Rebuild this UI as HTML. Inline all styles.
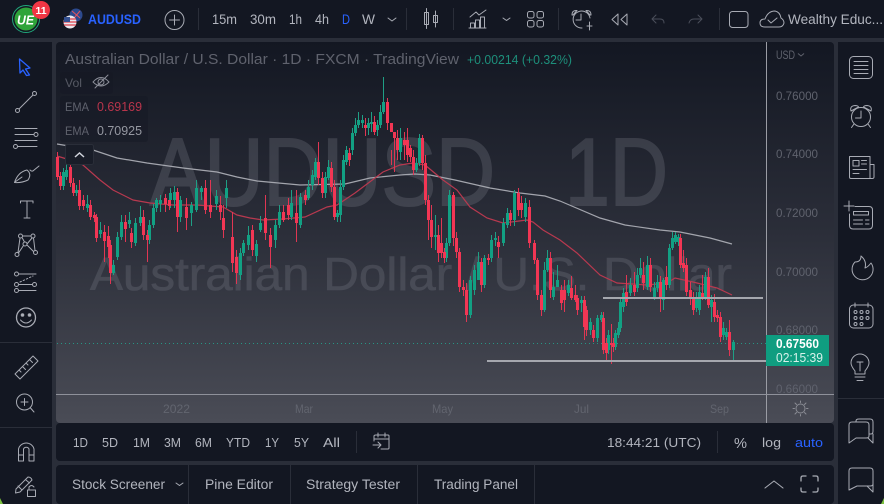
<!DOCTYPE html>
<html><head><meta charset="utf-8"><style>
html,body{margin:0;padding:0;background:#2a2e39;width:884px;height:504px;overflow:hidden}
svg{display:block;font-family:"Liberation Sans",sans-serif}
.i{fill:none;stroke:#a8abb4;stroke-width:1;stroke-linecap:round;stroke-linejoin:round}
.t{fill:#b2b5be;font-size:13.5px}
.a{fill:#5f626d;font-size:12px}
</style></head><body>
<svg width="884" height="504" viewBox="0 0 884 504" xmlns="http://www.w3.org/2000/svg">
<defs><linearGradient id="g" x1="0" y1="0" x2="0" y2="1"><stop offset="0" stop-color="#131722"/><stop offset=".5" stop-color="#2b2e39"/><stop offset="1" stop-color="#4a4c56"/></linearGradient></defs>
<rect width="884" height="504" fill="#2a2e39"/>
<rect width="884" height="38" fill="#131722"/>
<rect x="0" y="42" width="52" height="462" fill="#131722"/>
<rect x="838" y="42" width="46" height="462" fill="#131722"/>
<rect x="56" y="42" width="778" height="381" rx="4" fill="url(#g)"/>
<rect x="56" y="423" width="778" height="38" rx="4" fill="#131722"/>
<rect x="56" y="465" width="778" height="39" rx="4" fill="#131722"/>
<path d="M0 342.500H52M0 427.500H52M838 398.500H884" stroke="#2a2e39"/>

<!-- watermark -->
<g fill="#787b86" stroke="#787b86" opacity=".3">
<text x="150" y="205" font-size="96" stroke-width="2" textLength="345" lengthAdjust="spacingAndGlyphs">AUDUSD</text>
<text x="565" y="205" font-size="96" stroke-width="2" textLength="103" lengthAdjust="spacingAndGlyphs">1D</text>
<text x="90" y="290" font-size="46" stroke-width=".6" textLength="642" lengthAdjust="spacingAndGlyphs">Australian Dollar / U.S. Dollar</text>
</g>

<!-- lines -->
<path d="M57 343.500H766" stroke="#22ab94" stroke-dasharray="1 3" opacity=".8"/>
<path d="M57 144L93 150L117 158L147 163L183 168L217 172L237 177L257 181L300 185L345 184L370 178L400 175L415 174L430 175L455 180L490 188L520 193L545 196L560 201L600 218L625 225L660 230L680 232L710 238L732 244" fill="none" stroke="#a3a5ad" stroke-width="1.200"/>
<path d="M57 156L70 160L83 165L100 180L113 190L133 200L150 203L173 205L197 205L223 207L237 215L250 218L263 220L283 219L305 217L327 207L337 205L355 193L383 172L400 165L413 163L425 165L443 180L457 190L470 207L487 218L503 223L527 220L533 222L543 230L560 240L577 253L600 275L617 283L647 285L667 283L675 278L693 282L717 288L732 295" fill="none" stroke="#b8394f" stroke-width="1.200"/>

<g transform="translate(.5 0)">
<!-- candle wicks -->
<path stroke="#1f9f85" fill="none" d="M63 168V190M66 160V180M76 185V196M87 195V212M100 222V238M113 260V275M117 232V260M121 215V240M129 212V228M135 218V246M140 206V226M149 220V244M153 204V228M156 198V212M160 195V212M170 188V208M174 186V208M180 196V222M191 202V226M196 180V212M201 186V200M216 190V210M226 180V208M240 248V280M243 240V256M248 226V250M256 240V262M260 216V232M275 220V248M279 205V228M291 190V220M300 193V228M308 180V200M312 170V190M315 158V180M325 172V198M328 160V180M337 210V222M340 180V222M343 155V190M346 146V165M352 128V155M355 118V136M358 112V128M362 115V128M368 118V135M371 112V132M377 120V136M380 105V128M383 77V114M400 128V160M416 158V172M419 134V166M435 215V250M446 238V262M449 190V246M470 276V318M474 265V295M478 252V278M484 255V288M491 235V262M495 232V246M503 218V246M507 208V228M514 190V226M525 198V222M544 262V312M547 250V272M553 272V300M557 265V285M568 280V296M581 296V312M590 318V335M597 315V342M601 312V322M608 330V354M615 330V350M618 322V338M620 298V332M623 288V312M630 278V296M637 268V292M640 258V278M647 256V290M654 282V300M657 275V292M663 278V310M669 244V288M672 232V250M675 232V244M678 234V246M696 292V312M699 285V315M705 272V300M711 295V322M723 322V340M726 328V340M733 340V361"/>
<path stroke="#e03653" fill="none" d="M57 152V180M60 172V190M70 160V187M73 178V196M79 180V210M83 195V210M90 200V220M94 212V222M96 214V242M104 225V262M108 226V258M110 240V284M125 215V242M131 228V248M143 210V240M147 230V262M165 194V212M169 196V210M177 188V232M186 198V230M205 180V214M210 180V218M220 196V220M223 205V238M232 212V272M236 250V284M252 225V256M265 195V240M270 228V268M283 205V222M288 198V220M296 190V242M305 190V205M318 142V185M322 172V198M331 162V192M334 180V220M349 148V166M365 118V136M374 116V135M387 98V130M391 150V165M394 132V172M397 130V160M404 132V160M407 128V162M410 145V162M413 150V175M422 135V170M425 155V205M428 195V240M431 205V248M438 225V262M441 218V258M444 248V263M453 192V246M456 232V258M459 248V292M463 280V296M466 283V322M481 258V292M488 254V265M498 236V258M510 210V226M518 188V216M521 196V218M529 200V248M534 240V264M537 258V300M541 290V316M550 252V298M561 285V310M564 280V312M571 276V300M575 285V302M577 295V315M584 296V340M586 306V336M593 325V342M603 312V354M606 338V362M611 324V364M613 338V352M626 275V306M634 272V296M643 262V290M650 258V292M660 276V312M666 266V290M680 234V268M683 250V272M686 258V296M690 282V305M693 292V315M702 275V300M708 268V308M714 294V322M717 310V322M720 312V342M729 320V356"/>
<!-- candle bodies -->
<path stroke="#12a083" stroke-width="3" fill="none" d="M63 172V186M66 170V177M76 190V193M87 204V208M100 230V234M113 265V273M117 237V257M121 222V237M129 220V224M135 223V243M140 217V223M149 225V240M153 208V225M156 200V208M160 200V204M170 193V200M174 192V200M180 200V217M191 205V213M196 188V210M201 188V192M216 196V204M226 188V198M240 253V275M243 243V253M248 235V245M256 244V256M260 223V230M275 225V240M279 212V225M291 203V217M300 197V225M308 187V198M312 175V185M315 162V177M325 177V193M328 167V178M337 213V217M340 187V215M343 160V187M346 150V162M352 133V150M355 125V133M358 120V125M362 120V123M368 123V128M371 122V124M377 125V130M380 112V125M383 102V112M400 138V152M416 163V170M419 138V163M435 235V237M446 243V258M449 195V243M470 280V315M474 270V290M478 262V280M484 258V285M491 240V258M495 238V240M503 223V243M507 213V225M514 193V220M525 203V217M544 270V310M547 258V270M553 287V297M557 280V287M568 285V293M581 300V303M590 322V330M597 318V338M601 315V320M608 335V350M615 333V347M618 328V335M620 302V328M623 293V307M630 285V293M637 275V288M640 268V275M647 265V287M654 288V297M657 282V288M663 280V300M669 248V285M672 238V248M675 235V242M678 237V242M696 297V308M699 292V310M705 277V298M711 300V307M723 328V335M726 332V337M733 342V350"/>
<path stroke="#f23654" stroke-width="3" fill="none" d="M57 157V177M60 176V186M70 167V183M73 183V193M79 190V206M83 200V206M90 205V217M94 215V218M96 217V238M104 232V241M108 236V247M110 245V273M125 222V229M131 233V242M143 217V235M147 235V240M165 198V204M169 200V206M177 192V217M186 207V218M205 188V210M210 205V212M220 205V212M223 218V230M232 237V263M236 257V273M252 230V250M265 218V233M270 235V247M283 212V220M288 205V215M296 213V223M305 195V200M318 162V178M322 178V193M331 168V187M334 187V217M349 153V160M365 125V128M374 122V132M387 102V123M391 123V132M394 132V138M397 138V150M404 140V145M407 140V155M410 148V157M413 157V170M422 138V163M425 163V200M428 200V220M431 220V237M438 235V253M441 243V253M444 252V258M453 195V238M456 238V252M459 252V287M463 287V290M466 290V315M481 262V285M488 258V260M498 242V247M510 213V220M518 193V210M521 203V210M529 207V243M534 243V260M537 260V295M541 295V310M550 258V290M561 290V303M564 290V300M571 288V298M575 295V300M577 298V310M584 300V327M586 310V330M593 330V338M603 318V350M606 343V353M611 343V345M613 343V347M626 292V302M634 285V292M643 275V283M650 265V287M660 282V298M666 277V285M680 238V265M683 263V268M686 265V292M690 290V298M693 298V310M702 293V298M708 277V305M714 302V317M717 315V318M720 317V337M729 332V350"/>
</g>
<path d="M603 298H763M487 361H766" stroke="#a5a7ae" stroke-width="2"/>

<!-- axis lines -->
<path d="M766.500 42V423" stroke="#9a9ca4"/>
<path d="M56 394.500H834" stroke="#8f919a"/>

<!-- legend -->
<rect x="60" y="72" width="53" height="22" rx="3" fill="#131722" opacity=".35"/>
<rect x="60" y="96" width="88" height="46" rx="3" fill="#131722" opacity=".4"/>
<text x="65" y="64" font-size="14.500" fill="#5f626d" textLength="394" lengthAdjust="spacingAndGlyphs">Australian Dollar / U.S. Dollar · 1D · FXCM · TradingView</text>
<text x="467" y="64" font-size="12.500" fill="#1d8f7b" textLength="105" lengthAdjust="spacingAndGlyphs">+0.00214 (+0.32%)</text>
<text x="65" y="87" font-size="12" fill="#565964" textLength="17" lengthAdjust="spacingAndGlyphs">Vol</text>
<g class="i" style="stroke:#8b8e98"><path d="M93 82Q101 73 109 82Q101 90 93 82Z"/><circle cx="101" cy="82" r="3"/><path d="M95 88L108 75"/></g>
<text x="65" y="111" font-size="12" fill="#5f626d" textLength="24" lengthAdjust="spacingAndGlyphs">EMA</text>
<text x="97" y="111" font-size="12.500" fill="#b8354b" textLength="45" lengthAdjust="spacingAndGlyphs">0.69169</text>
<text x="65" y="135" font-size="12" fill="#5f626d" textLength="24" lengthAdjust="spacingAndGlyphs">EMA</text>
<text x="97" y="135" font-size="12.500" fill="#9598a1" textLength="45" lengthAdjust="spacingAndGlyphs">0.70925</text>
<rect x="65.500" y="144.500" width="28" height="20" rx="2" fill="#191d28" stroke="#2a2e39"/>
<path d="M75 157L79.500 153L84 157" fill="none" stroke="#d1d4dc" stroke-width="1.500"/>

<!-- price axis -->
<text x="776" y="59" class="a" textLength="19" lengthAdjust="spacingAndGlyphs">USD</text>
<path d="M798 53.500L801 56L804 53.500" fill="none" stroke="#5f626d"/>
<g class="a">
<text x="776" y="100" textLength="42" lengthAdjust="spacingAndGlyphs">0.76000</text>
<text x="776" y="158" textLength="42" lengthAdjust="spacingAndGlyphs">0.74000</text>
<text x="776" y="217" textLength="42" lengthAdjust="spacingAndGlyphs">0.72000</text>
<text x="776" y="276" textLength="42" lengthAdjust="spacingAndGlyphs">0.70000</text>
<text x="776" y="334" textLength="42" lengthAdjust="spacingAndGlyphs">0.68000</text>
<text x="776" y="393" textLength="42" lengthAdjust="spacingAndGlyphs">0.66000</text>
</g>
<rect x="766" y="335" width="63" height="31" fill="#0f9d80"/>
<text x="776" y="348" font-size="12.500" font-weight="bold" fill="#fff" textLength="43" lengthAdjust="spacingAndGlyphs">0.67560</text>
<text x="776" y="362" font-size="12.500" fill="#d6f1ea" textLength="47" lengthAdjust="spacingAndGlyphs">02:15:39</text>

<!-- time axis -->
<g font-size="12" fill="#62656f">
<text x="163" y="413" textLength="27" lengthAdjust="spacingAndGlyphs">2022</text>
<text x="295" y="413" textLength="18" lengthAdjust="spacingAndGlyphs">Mar</text>
<text x="432" y="413" textLength="21" lengthAdjust="spacingAndGlyphs">May</text>
<text x="574" y="413" textLength="15" lengthAdjust="spacingAndGlyphs">Jul</text>
<text x="710" y="413" textLength="19" lengthAdjust="spacingAndGlyphs">Sep</text>
</g>
<g class="i" style="stroke:#8a8c94"><circle cx="800.500" cy="408.500" r="4.500"/><path d="M800.500 401V402.500M800.500 414.500V416M793 408.500H794.500M806.500 408.500H808M795 403L796.500 404.500M804.500 412.500L806 414M806 403L804.500 404.500M796.500 412.500L795 414"/></g>

<!-- top bar -->
<circle cx="26" cy="19" r="13.500" fill="none" stroke="#21a67a" stroke-width="1"/>
<circle cx="26" cy="19" r="11.500" fill="#2fa43a"/>
<text x="17" y="24.500" font-size="13" font-weight="bold" font-style="italic" fill="#fff" textLength="17" lengthAdjust="spacingAndGlyphs">UE</text>
<circle cx="41" cy="10" r="9" fill="#f23645"/>
<text x="41" y="14" font-size="10.500" font-weight="bold" fill="#fff" text-anchor="middle">11</text>
<circle cx="76" cy="15" r="6.500" fill="#2c4a8e"/><path d="M72 11L80 18M80 11L74 18" stroke="#e2545f" stroke-width="1"/>
<circle cx="70" cy="22" r="6.500" fill="#e9e9ee"/><path d="M64 19H76M63.500 22H76.500M64 25H76" stroke="#e0414d" stroke-width="1.300"/><path d="M64 17H70V22H64Z" fill="#34508f"/>
<text x="88" y="24" font-size="14" font-weight="bold" fill="#2962ff" textLength="53" lengthAdjust="spacingAndGlyphs">AUDUSD</text>
<g class="i"><circle cx="174.500" cy="20" r="9.500"/><path d="M174.500 15V25M169.500 20H179.500"/></g>
<path d="M198.500 8V30M406.500 8V30M453.500 8V30M558.500 8V30M719.500 8V30" stroke="#2a2e39"/>
<g class="t">
<text x="212" y="24" textLength="25" lengthAdjust="spacingAndGlyphs">15m</text>
<text x="250" y="24" textLength="26" lengthAdjust="spacingAndGlyphs">30m</text>
<text x="289" y="24" textLength="13" lengthAdjust="spacingAndGlyphs">1h</text>
<text x="315" y="24" textLength="14" lengthAdjust="spacingAndGlyphs">4h</text>
<text x="342" y="24" style="fill:#2962ff" textLength="8" lengthAdjust="spacingAndGlyphs">D</text>
<text x="362" y="24" textLength="13" lengthAdjust="spacingAndGlyphs">W</text>
<text x="788" y="24" textLength="95" lengthAdjust="spacingAndGlyphs">Wealthy Educ...</text>
</g>
<g class="i">
<path d="M388 18L392 21L396 18"/>
<path d="M426.500 8.500V28.500M424.500 12.500H428.500V24.500H424.500ZM435.500 11V27M433.500 15.500H437.500V22.500H433.500Z"/>
<path d="M470 17L476 12L479 15L486 10M470.500 28V23H474.500V28ZM475.500 28V20H479.500V28ZM480.500 28V17H484.500V28ZM469 28H486"/>
<path d="M503 18L506.500 20.500L510 18"/>
<rect x="527.500" y="11.500" width="6.500" height="6.500" rx="2"/><rect x="537" y="11.500" width="6.500" height="6.500" rx="2"/><rect x="527.500" y="20.500" width="6.500" height="6.500" rx="2"/><rect x="537" y="20.500" width="6.500" height="6.500" rx="2"/>
<path d="M590 18A8.500 8.500 0 1 0 582 28M581 14V20H576M572 15Q572 10 577 10.500L573 15ZM591 15Q591 10 586 10.500L590 15ZM587 26H592M589.500 22V30"/>
<path d="M612 19.500L618 14V25ZM627 14L621 19.500L627 25Z"/>
</g>
<g class="i" style="stroke:#4a4e5a"><path d="M652 19L656 15M652 19L656 23M652 19H660Q664 19 664 23"/><path d="M702 19L698 15M702 19L698 23M702 19H694Q690 19 689 23"/></g>
<g class="i"><rect x="729.500" y="11.500" width="18.500" height="16" rx="3"/><path d="M765 27Q760 27 760 23Q760 19 765 19Q768 11 775 11Q780 12 781 18Q784 20 784 23Q783 27 779 27ZM768 20L771 23L777 18"/></g>

<!-- left sidebar -->
<path d="M19.500 59L30 68L25.500 69L29.500 75L26.500 75.500L23 70L20 73Z" fill="none" stroke="#2962ff" stroke-width="1.300" stroke-linejoin="round"/>
<g class="i">
<circle cx="17.500" cy="110.500" r="2"/><circle cx="34.500" cy="93.500" r="2"/><path d="M19 109L33 95"/>
<path d="M15 128.500H37M15 134.500H34M15 140.500H37M18 146.500H37"/><circle cx="36" cy="134.500" r="2"/><circle cx="15.500" cy="146.500" r="2"/>
<path d="M14.500 182.500Q18 172 27 170Q32 174 28 180Q22 183 14.500 182.500ZM15 182L22 177M30 170Q32 172 33.500 170.500L39 166"/>
<path d="M20.500 201H33M27 201V218M24 218H30M20.500 201V203M33 201V203"/>
<circle cx="20.500" cy="236" r="2"/><circle cx="33" cy="236" r="2"/><circle cx="25" cy="244" r="2"/><circle cx="17" cy="254.500" r="2"/><circle cx="35.500" cy="252.500" r="2"/>
<path d="M18 252.500L20 238M22 237.500L24.500 242M27 244L32 238M33.500 238L35 250.500M18.500 253L23.500 245.500M27 245L33.500 251.500M22.500 236H31"/>
<circle cx="16.500" cy="274" r="2"/><circle cx="16.500" cy="284.500" r="2"/><circle cx="16.500" cy="290.500" r="2"/><circle cx="34.500" cy="284.500" r="2"/>
<path d="M19 274H36M19 284.500H32M19 290.500H36"/><path d="M20 282L33 276" stroke-dasharray="1.500 2"/>
<circle cx="26" cy="317.500" r="9.500" style="stroke-width:1.300"/><circle cx="22.500" cy="315" r="1.300" style="fill:#b2b5be"/><circle cx="29.500" cy="315" r="1.300" style="fill:#b2b5be"/><path d="M20.500 320Q26 326 31.500 320"/>
<path d="M15 374L33 356L38 361L20 379ZM19 370L21 372M22.500 366.500L25.500 369.500M26 363L28 365M29.500 359.500L32.500 362.500"/>
<circle cx="24.500" cy="402" r="8"/><path d="M30.500 408L34 412M24.500 398.500V405.500M21 402H28"/>
<path d="M18.500 461V449A8 8 0 0 1 34 449V461H29V449A3 3 0 0 0 23.500 449V461ZM18.500 455H23.500M29 455H34"/>
<path d="M16 489L28 477Q31 477 32 480L20 492L15.500 493ZM18 486L22 490M26 480L29.500 483"/><rect x="27.500" y="490" width="8" height="6.500"/><path d="M29 490V487Q31.500 484 34 487"/>
</g>

<!-- right sidebar -->
<g class="i">
<rect x="849.500" y="56.500" width="23" height="22" rx="4"/><path d="M854 61.500H868M854 65.500H868M854 69.500H868M854 73.500H868"/>
<circle cx="861" cy="117" r="9.500"/><path d="M861 111V118H855.500M851 111Q849.500 106 855 105.500Q858 105.500 858.500 107ZM871 111Q872.500 106 867 105.500Q864 105.500 863.500 107ZM854 124L851.500 127.500M868 124L870.500 127.500"/>
<path d="M849.500 156.500H870V178.500H851Q849.500 178.500 849.500 177ZM870 164.500H874V177Q874 178.500 872 178.500H870M853 160.500H859V166H853ZM861.500 160.500H866.500M861.500 164H866.500M853 169.500H866.500M853 173.500H859"/>
<path d="M849 201V211M844 206H854M855 206.500H869Q872.500 206.500 872.500 210V225Q872.500 229 869 229H853Q849.500 229 849.500 225V214M853.500 211.500H868.500V215H853.500ZM853.500 220H862.500M865.500 220H869M853.500 224H862.500M865.500 224H869"/>
<path d="M861 256Q861 262 855 262A10.500 10.500 0 1 0 871 263Q868 267 865 268Q867 261 861 256Z"/>
<rect x="849.500" y="305" width="23.500" height="23" rx="4"/><path d="M855 303V307M868 303V307"/>
<circle cx="855.500" cy="312" r="1.500"/><circle cx="861.500" cy="312" r="1.500"/><circle cx="867.500" cy="312" r="1.500"/><circle cx="855.500" cy="318" r="1.500"/><circle cx="861.500" cy="318" r="1.500"/><circle cx="867.500" cy="318" r="1.500"/><circle cx="855.500" cy="324" r="1.500"/><circle cx="861.500" cy="324" r="1.500"/>
<path d="M855 371Q851 366 851 363A9 9 0 1 1 869 363Q869 366 865 371V374H855ZM857 362H863M860 362V371M855 377H865M857 380.500H863"/>
<path d="M849 443V425Q849 422 852 422H866Q869 422 869 425V436Q869 438 866 438H856ZM856 422V421Q856 419 859 419H870Q873 419 873 422V431Q873 434 871 434H869M873 434V443L868 438"/>
<path d="M849 490V471Q849 468 852 468H870Q873 468 873 471V484Q873 486 870 486H857L849 490ZM873 484V492L867 486"/>
</g>
<path d="M881 504L884 498V504ZM0 498L3 504H0Z" fill="#7cc23f"/>

<!-- range bar -->
<g class="t" style="font-size:13px">
<text x="73" y="447" textLength="15" lengthAdjust="spacingAndGlyphs">1D</text>
<text x="102" y="447" textLength="16" lengthAdjust="spacingAndGlyphs">5D</text>
<text x="133" y="447" textLength="17" lengthAdjust="spacingAndGlyphs">1M</text>
<text x="164" y="447" textLength="17" lengthAdjust="spacingAndGlyphs">3M</text>
<text x="195" y="447" textLength="17" lengthAdjust="spacingAndGlyphs">6M</text>
<text x="226" y="447" textLength="24" lengthAdjust="spacingAndGlyphs">YTD</text>
<text x="265" y="447" textLength="14" lengthAdjust="spacingAndGlyphs">1Y</text>
<text x="294" y="447" textLength="15" lengthAdjust="spacingAndGlyphs">5Y</text>
<text x="323" y="447" textLength="17" lengthAdjust="spacingAndGlyphs">All</text>
<text x="607" y="447" textLength="94" lengthAdjust="spacingAndGlyphs">18:44:21 (UTC)</text>
<text x="734" y="448" style="font-size:15px" textLength="13" lengthAdjust="spacingAndGlyphs">%</text>
<text x="762" y="447" textLength="19" lengthAdjust="spacingAndGlyphs">log</text>
<text x="795" y="447" style="fill:#2962ff" textLength="28" lengthAdjust="spacingAndGlyphs">auto</text>
</g>
<path d="M356.500 431V453M717.500 431V453" stroke="#2a2e39"/>
<g class="i"><path d="M374 441V436Q374 435 376 435H388Q389 435 389 436V448Q389 449 388 449H381M378 433V437M385 433V437M374 439H389M373 445H381M378 442L381 445L378 448"/></g>

<!-- bottom tabs -->
<g class="t" style="font-size:13.500px">
<text x="72" y="489" textLength="93" lengthAdjust="spacingAndGlyphs">Stock Screener</text>
<text x="205" y="489" textLength="68" lengthAdjust="spacingAndGlyphs">Pine Editor</text>
<text x="306" y="489" textLength="94" lengthAdjust="spacingAndGlyphs">Strategy Tester</text>
<text x="434" y="489" textLength="84" lengthAdjust="spacingAndGlyphs">Trading Panel</text>
</g>
<path d="M188.500 465V504M290.500 465V504M417.500 465V504M534.500 465V504" stroke="#2a2e39"/>
<g class="i"><path d="M176 483L179.500 485.500L183 483"/><path d="M765 488L774 481L783 488" style="stroke-width:1.100"/><path d="M801 481V478Q801 476 803 476H806M813 476H816Q818 476 818 478V481M801 488V490Q801 492 803 492H806M813 492H816Q818 492 818 490V488" style="stroke-width:1.300"/></g>
</svg>
</body></html>
